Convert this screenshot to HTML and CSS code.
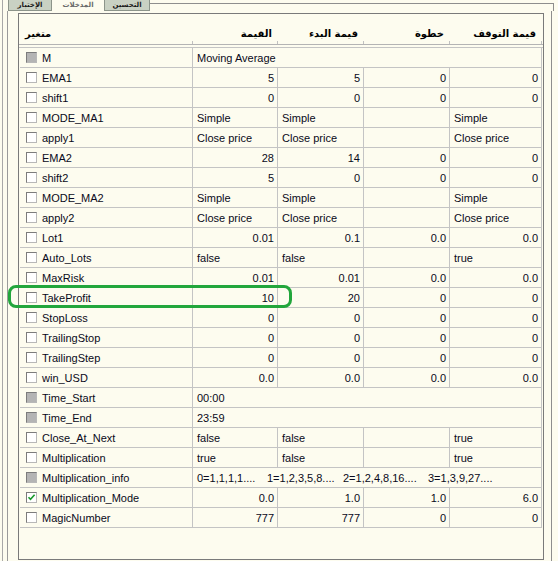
FILE: index.html
```html
<!DOCTYPE html>
<html lang="ar">
<head>
<meta charset="utf-8">
<title>Inputs</title>
<link rel="stylesheet" href="styles.css">
</head>
<body>
<div class="win">
  <div class="tabbar">
    <div class="tab t1">الإختبار</div>
    <div class="tab t2">المدخلات</div>
    <div class="tab t3">التحسين</div>
    <div class="tabfill"></div>
  </div>
  <div class="panel">
    <div class="list">
      <div class="head">
        <div class="hc hname">متغير</div>
        <div class="hc">القيمة</div>
        <div class="hc">قيمة البدء</div>
        <div class="hc">خطوة</div>
        <div class="hc hlast">قيمة التوقف</div>
      </div>
      <div class="headgap"></div>
      <div class="grid">
        <div class="name"><span class="cb gray"></span>M</div><div class="span4 txt">Moving Average</div>

        <div class="name"><span class="cb"></span>EMA1</div><div class="num">5</div><div class="num">5</div><div class="num">0</div><div class="num last">0</div>
        <div class="name"><span class="cb"></span>shift1</div><div class="num">0</div><div class="num">0</div><div class="num">0</div><div class="num last">0</div>
        <div class="name"><span class="cb"></span>MODE_MA1</div><div class="txt">Simple</div><div class="txt">Simple</div><div class="txt"></div><div class="txt last">Simple</div>
        <div class="name"><span class="cb"></span>apply1</div><div class="txt">Close price</div><div class="txt">Close price</div><div class="txt"></div><div class="txt last">Close price</div>
        <div class="name"><span class="cb"></span>EMA2</div><div class="num">28</div><div class="num">14</div><div class="num">0</div><div class="num last">0</div>
        <div class="name"><span class="cb"></span>shift2</div><div class="num">5</div><div class="num">0</div><div class="num">0</div><div class="num last">0</div>
        <div class="name"><span class="cb"></span>MODE_MA2</div><div class="txt">Simple</div><div class="txt">Simple</div><div class="txt"></div><div class="txt last">Simple</div>
        <div class="name"><span class="cb"></span>apply2</div><div class="txt">Close price</div><div class="txt">Close price</div><div class="txt"></div><div class="txt last">Close price</div>
        <div class="name"><span class="cb"></span>Lot1</div><div class="num">0.01</div><div class="num">0.1</div><div class="num">0.0</div><div class="num last">0.0</div>
        <div class="name"><span class="cb"></span>Auto_Lots</div><div class="txt">false</div><div class="txt">false</div><div class="txt"></div><div class="txt last">true</div>
        <div class="name"><span class="cb"></span>MaxRisk</div><div class="num">0.01</div><div class="num">0.01</div><div class="num">0.0</div><div class="num last">0.0</div>
        <div class="name"><span class="cb"></span>TakeProfit</div><div class="num">10</div><div class="num">20</div><div class="num">0</div><div class="num last">0</div>
        <div class="name"><span class="cb"></span>StopLoss</div><div class="num">0</div><div class="num">0</div><div class="num">0</div><div class="num last">0</div>
        <div class="name"><span class="cb"></span>TrailingStop</div><div class="num">0</div><div class="num">0</div><div class="num">0</div><div class="num last">0</div>
        <div class="name"><span class="cb"></span>TrailingStep</div><div class="num">0</div><div class="num">0</div><div class="num">0</div><div class="num last">0</div>
        <div class="name"><span class="cb"></span>win_USD</div><div class="num">0.0</div><div class="num">0.0</div><div class="num">0.0</div><div class="num last">0.0</div>
        <div class="name"><span class="cb gray"></span>Time_Start</div><div class="span4 txt">00:00</div>
        <div class="name"><span class="cb gray"></span>Time_End</div><div class="span4 txt">23:59</div>
        <div class="name"><span class="cb"></span>Close_At_Next</div><div class="txt">false</div><div class="txt">false</div><div class="txt"></div><div class="txt last">true</div>
        <div class="name"><span class="cb"></span>Multiplication</div><div class="txt">true</div><div class="txt">false</div><div class="txt"></div><div class="txt last">true</div>
        <div class="name"><span class="cb gray"></span>Multiplication_info</div><div class="span4 txt info"><span class="i0">0=1,1,1,1....</span><span class="i1">1=1,2,3,5,8....</span><span class="i2">2=1,2,4,8,16....</span><span class="i3">3=1,3,9,27....</span></div>
        <div class="name"><span class="cb checked"><svg viewBox="0 0 9 9" width="9" height="9"><path d="M1.5 4.2 L3.5 6.4 L7.6 1.8" fill="none" stroke="#1a9a2a" stroke-width="1.6"/></svg></span>Multiplication_Mode</div><div class="num">0.0</div><div class="num">1.0</div><div class="num">1.0</div><div class="num last">6.0</div>
        <div class="name"><span class="cb"></span>MagicNumber</div><div class="num">777</div><div class="num">777</div><div class="num">0</div><div class="num last">0</div>
      </div>
    </div>
  </div>
</div>
<div class="mark"></div>
</body>
</html>
```
FILE: styles.css
```css
html, body {
  margin: 0;
  padding: 0;
}
body {
  width: 558px;
  height: 561px;
  overflow: hidden;
  background: #fdfcef;
  font-family: "Liberation Sans", Arial, sans-serif;
  font-size: 11px;
  color: #0a0a20;
  position: relative;
}
.win {
  margin-left: 2px;
  border-left: 1px solid #a8a8a8;
  padding-left: 4px;
  height: 561px;
  box-sizing: border-box;
}
.tabbar {
  display: flex;
  height: 11px;
  padding-left: 1px;
  width: 546px;
}
.tab {
  height: 11px;
  box-sizing: border-box;
  font-family: "DejaVu Sans", sans-serif;
  font-size: 7px;
  font-weight: bold;
  line-height: 10px;
  text-align: center;
  overflow: hidden;
  direction: rtl;
  color: #1a1a1a;
}
.t1 {
  width: 44px;
  background: #c9d1c3;
  border: 1px solid #8c948a;
  border-top: none;
}
.t2 {
  width: 52px;
  color: #6a6a6a;
}
.t3 {
  width: 46px;
  background: #c9d1c3;
  border: 1px solid #8c948a;
  border-top: none;
}
.tabfill {
  flex: 1;
  margin-top: 3px;
  border-top: 1px solid #8e8e8e;
  border-right: 1px solid #8e8e8e;
}
.panel {
  width: 545px;
  height: 550px;
  box-sizing: border-box;
  border-left: 1px solid #9a9a9a;
  border-right: 1px solid #8e8e8e;
  padding: 2px 7px 0 10px;
}
.list {
  width: 526px;
  height: 547px;
  box-sizing: border-box;
  border: 1px solid #7a7a7a;
}
.head {
  display: grid;
  grid-template-columns: 174px 85px 86px 86px 92px;
  height: 31px;
  border-bottom: 1px solid #b4b4b4;
  box-sizing: border-box;
}
.hc {
  position: relative;
  font-family: "DejaVu Sans", sans-serif;
  font-size: 10px;
  font-weight: bold;
  color: #000;
  text-align: right;
  padding: 14px 6px 0 0;
  direction: rtl;
}
.hc::after {
  content: "";
  position: absolute;
  right: 0;
  bottom: 0;
  height: 3px;
  border-right: 1px solid #c0c0c0;
}
.hname {
  text-align: left;
  direction: ltr;
  padding-left: 6px;
}
.headgap {
  height: 2px;
}
.grid {
  display: grid;
  grid-template-columns: 174px 85px 86px 86px 92px;
  border-top: 1px solid #c4c4c4;
}
.grid > div {
  height: 20px;
  box-sizing: border-box;
  border-bottom: 1px solid #c4c4c4;
  border-right: 1px solid #c4c4c4;
  display: flex;
  align-items: center;
  white-space: nowrap;
  overflow: hidden;
}
.name {
  padding-left: 6px;
  margin-left: 1px;
}
.num {
  justify-content: flex-end;
  padding-right: 3px;
}
.txt {
  padding-left: 4px;
}
.span4 {
  grid-column: span 4;
}
.cb {
  width: 11px;
  height: 11px;
  box-sizing: border-box;
  border: 1px solid #7c7c7c;
  border-right-color: #b8b8b8;
  border-bottom-color: #b8b8b8;
  background: #ffffff;
  margin-right: 5px;
  flex: none;
  display: flex;
  align-items: center;
  justify-content: center;
}
.cb.gray {
  background: #b4b4b4;
}
.info span {
  display: inline-block;
}
.i0 { width: 70px; }
.i1 { width: 76px; }
.i2 { width: 85px; }
.mark {
  position: absolute;
  left: 8px;
  top: 285px;
  width: 284px;
  height: 23px;
  box-sizing: border-box;
  border: 3px solid #22a63c;
  border-radius: 8px;
}
```
